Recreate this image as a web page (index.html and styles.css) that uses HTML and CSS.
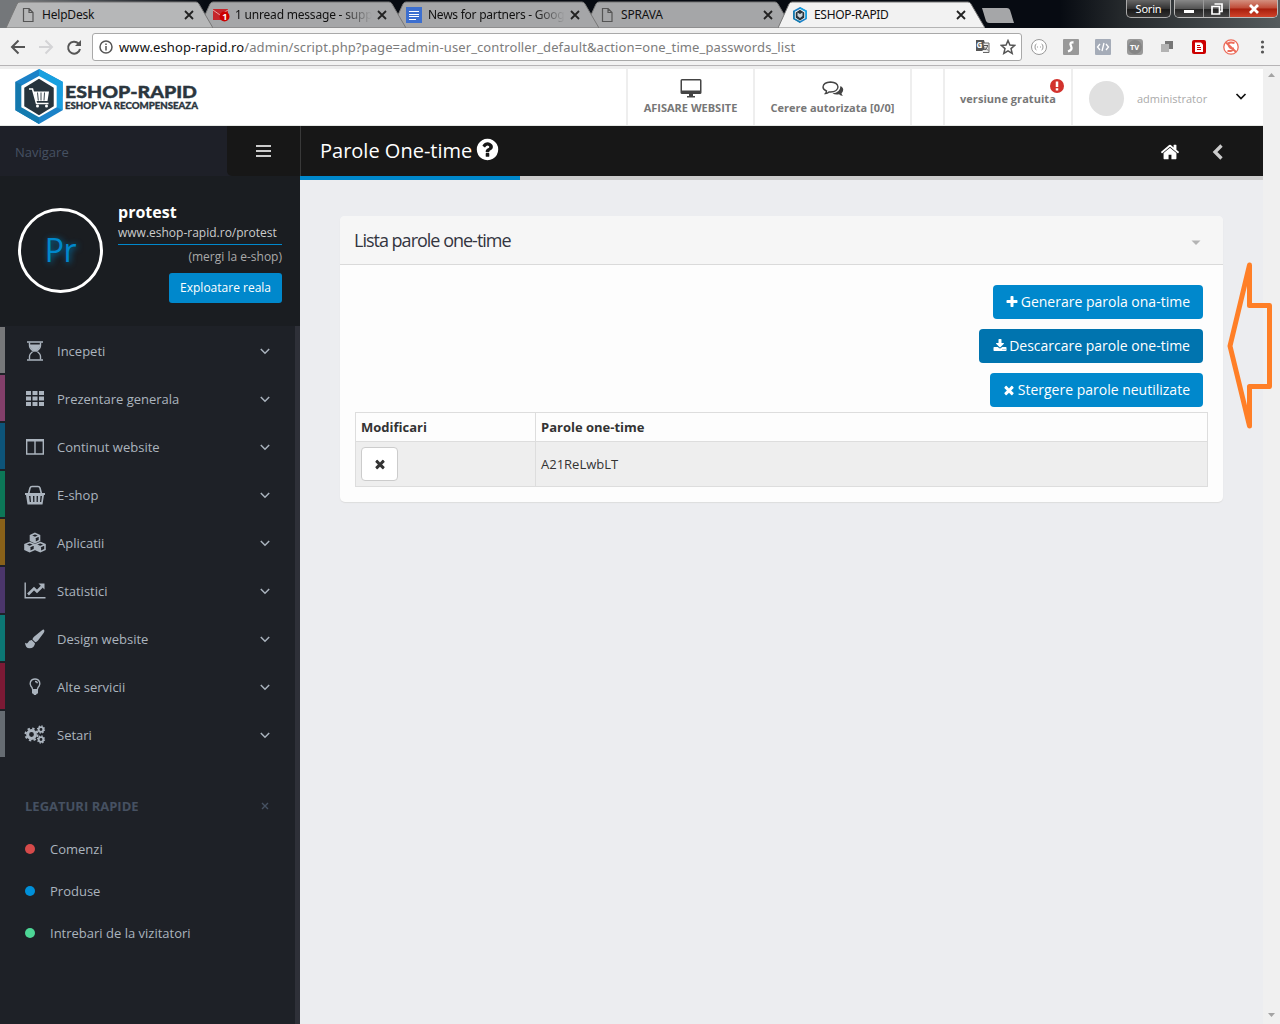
FILE: index.html
```html
<!DOCTYPE html>
<html lang="ro">
<head>
<meta charset="utf-8">
<title>ESHOP-RAPID</title>
<link rel="stylesheet" href="styles.css">
</head>
<body>
<svg class="defs" width="0" height="0">
  <symbol id="times" viewBox="0 0 1792 1792"><path d="M1490 1322q0 40-28 68l-136 136q-28 28-68 28t-68-28l-294-294-294 294q-28 28-68 28t-68-28l-136-136q-28-28-28-68t28-68l294-294-294-294q-28-28-28-68t28-68l136-136q28-28 68-28t68 28l294 294 294-294q28-28 68-28t68 28l136 136q28 28 28 68t-28 68l-294 294 294 294q28 28 28 68z"/></symbol>
  <symbol id="chev" viewBox="0 0 10 8"><path d="M1.500 2.300l3.500 3.500 3.500-3.500" fill="none" stroke="currentColor" stroke-width="1.250"/></symbol>
  <symbol id="page" viewBox="0 0 12 14"><path d="M1.5.5h5.500l4 4v9h-9.500zM7 .5v4h4" fill="none" stroke="#555" stroke-width="1.2"/></symbol>
  <symbol id="close" viewBox="0 0 10 10"><path d="M1 1l8 8M9 1l-8 8" stroke="currentColor" stroke-width="1.8"/></symbol>
  <symbol id="tabshape" viewBox="0 0 207 28" ><path d="M0 28L11 4Q12 2 14 2H190Q192 2 193 4L207 28z" stroke="#777" stroke-width="1"/></symbol>
  <symbol id="hex" viewBox="0 0 48 56">
    <path d="M24 0l24 13v29L24 56 0 42V13z" fill="#1b82c8"/><path d="M24 0l24 13v15H24z" fill="#17a0e0"/><path d="M0 13l8 4v21l-8 4z" fill="#1478ad"/><path d="M48 13v29l-8-4V17z" fill="#199fe0"/><path d="M0 42l24 14V46L8 37z" fill="#147bb0"/>
    <path d="M24 7l18 10v22L24 49 6 39V17z" fill="#fff"/><path d="M24 10l15 9v19l-15 9-15-9V19z" fill="#27343d"/>
  </symbol>
</svg>
<div class="browser">
  <div class="tabs">
    <div class="tab t1"><svg class="shape"><use href="#tabshape"/></svg><svg class="fav" width="12" height="14"><use href="#page"/></svg><span class="label">HelpDesk</span><svg class="x"><use href="#close"/></svg></div>
    <div class="tab t2"><svg class="shape"><use href="#tabshape"/></svg><svg class="fav" width="17" height="14" viewBox="0 0 17 14"><path d="M0 1h15v11H0z" fill="#c5262c"/><path d="M0 2l7 5 8-5" fill="none" stroke="#e9a3a3"/><circle cx="11.500" cy="8.500" r="5" fill="#c00"/><text x="9.300" y="12" font-size="9" font-weight="700" fill="#fff" font-family="Open Sans">1</text></svg><span class="label fade">1 unread message - supp</span><svg class="x"><use href="#close"/></svg></div>
    <div class="tab t3"><svg class="shape"><use href="#tabshape"/></svg><svg class="fav" width="16" height="16"><path d="M0 0h16v16H0z" fill="#3c6fd0"/><path d="M3 4.500h10M3 7.500h10M3 9.500h10M3 12.500h7" stroke="#fff"/></svg><span class="label fade">News for partners - Goog</span><svg class="x"><use href="#close"/></svg></div>
    <div class="tab t4"><svg class="shape"><use href="#tabshape"/></svg><svg class="fav" width="12" height="14"><use href="#page"/></svg><span class="label">SPRAVA</span><svg class="x"><use href="#close"/></svg></div>
    <div class="tab t5"><svg class="shape"><use href="#tabshape"/></svg><svg class="fav" width="16" height="16" viewBox="0 0 16 16"><use href="#hex"/><path d="M5.500 5.500L8 7l2.500-1.500V9L8 11 5.500 9z" fill="#c9d3da"/></svg><span class="label">ESHOP-RAPID</span><svg class="x"><use href="#close"/></svg></div>
    <svg class="newtab" width="33" height="15"><path d="M1 0h25q2 0 3 2l4 13H8q-2 0-3-2z" fill="#a5a6a8"/></svg>
    <div class="wincontrols">
      <span class="user">Sorin</span>
      <div class="wc">
        <span class="w1"><svg width="12" height="12"><path d="M1 8.500h10" stroke="#fff" stroke-width="3"/></svg></span>
        <span class="w2"><svg width="12" height="12"><path d="M3.500 1h7.500v7.500H9M1 3.500h7.500V11H1z" fill="none" stroke="#fff" stroke-width="1.700"/></svg></span>
        <span class="w3"><svg width="12" height="12"><path d="M2 2l8 8M10 2l-8 8" stroke="#fff" stroke-width="2.800"/></svg></span>
      </div>
    </div>
  </div>
  <div class="toolbar">
    <svg class="navi" width="84" height="20" fill="none" stroke-width="2"><path d="M16 10H3M9.500 3.500L3 10l6.500 6.500" stroke="#555"/><path d="M30 10h13M36.500 3.500L43 10l-6.500 6.500" stroke="#d4d4d6"/><path d="M69.500 6.500A6 6 0 1 0 71 12" stroke="#555"/><path d="M72 3v6h-6z" fill="#555"/></svg>
    <div class="url">
      <svg width="14" height="14" fill="none" stroke="#555" stroke-width="1.500"><circle cx="7" cy="7" r="6"/><path d="M7 6v4.500M7 3.500v1.500"/></svg>
      <span class="address"><b>www.eshop-rapid.ro</b>/admin/script.php?page=admin-user_controller_default&amp;action=one_time_passwords_list</span>
      <svg class="tr" width="15" height="15"><path d="M1 1h8l3 11H1z" fill="#555"/><path d="M6 4h8v9.500H8" fill="#eee" stroke="#666"/><path d="M1 1h6.500l2.500 10H1z" fill="#555"/><path d="M9 6.500h4M12.500 7q-.5 2.500-2.500 4M10 8.500l3 3" stroke="#555" fill="none"/><text x="1.500" y="8.500" font-size="8" font-weight="700" fill="#fff" font-family="Open Sans">G</text></svg>
      <svg width="16" height="16"><path d="M8 1.500l1.900 4.500 4.800.4-3.700 3.200 1.200 4.800L8 11.900l-4.200 2.500L5 9.600 1.300 6.400l4.800-.4z" fill="none" stroke="#555" stroke-width="1.500"/></svg>
    </div>
    <div class="exts">
      <svg><circle cx="8" cy="8" r="7.500" fill="#fff" stroke="#999"/><path d="M5.500 5q-1.500 0-1.500 3 0 3 1.500 3M10.500 5q1.500 0 1.500 3 0 3-1.500 3M6 8h1M9 8h1" stroke="#999" fill="none"/></svg>
      <svg><rect width="16" height="16" rx="1" fill="#999"/><path d="M10.500 3.500Q6 3 8 7t-3 5.500" stroke="#fff" fill="none" stroke-width="2.300"/></svg>
      <svg><rect width="16" height="16" rx="1" fill="#a5acb8"/><path d="M5 5L2.500 8 5 11M11 5l2.500 3L11 11M9 4l-2 8" stroke="#fff" fill="none" stroke-width="1.300"/></svg>
      <svg><rect width="16" height="16" rx="3" fill="#999"/><circle cx="8" cy="8" r="7" fill="#858585"/><text x="3" y="11" font-size="7.500" font-weight="700" fill="#fff" font-family="Open Sans">TV</text></svg>
      <svg><path d="M6 2h8v8H6z" fill="#777"/><path d="M2 5h8v8H2z" fill="#b3b3b3"/></svg>
      <svg><rect x="1" y="1" width="14" height="14" rx="2" fill="#c00"/><path d="M4 3.500h6l2 2V13H4z" fill="#fff"/><path d="M6 6.500h3M6 8.500h4M6 10.500h4" stroke="#c00"/></svg>
      <svg><circle cx="8" cy="8" r="7.200" fill="#fff" stroke="#ec6b59" stroke-width="1.300"/><path d="M11.500 4Q4.500 2.500 5.500 6t4.500 3.500Q10.500 12.500 4.500 12M3 3.500L13 13" stroke="#ec6b59" fill="none" stroke-width="2"/></svg>
      <svg><g fill="#555"><circle cx="7.500" cy="3" r="1.600"/><circle cx="7.500" cy="8" r="1.600"/><circle cx="7.500" cy="13" r="1.600"/></g></svg>
    </div>
  </div>
</div>
<div class="viewport">
<div class="site">
  <header class="top">
    <svg class="logo" width="200" height="56">
      <use href="#hex" width="48" height="55" x="0"/>
      <path d="M14 20h3.500l4 14.500h12" fill="none" stroke="#fff" stroke-width="1.500"/><path d="M18.500 22.500H34l-1.500 9.500H21z" fill="#fff"/><path d="M22.500 23.500l.8 8M26 23.500v8M29.500 23.500l-.5 8" stroke="#27343d" stroke-width=".9"/><circle cx="22.500" cy="37" r="1.500" fill="#fff"/><circle cx="31.500" cy="37" r="1.500" fill="#fff"/>
      <text x="50" y="28.700" textLength="132" lengthAdjust="spacingAndGlyphs" class="lg1">ESHOP-RAPID</text>
      <text x="50" y="39.700" textLength="133" lengthAdjust="spacingAndGlyphs" class="lg2">ESHOP VA RECOMPENSEAZA</text>
    </svg>
    <div class="cell c1"><svg width="22" height="19" fill="#444"><path d="M2 0h18q1.500 0 1.500 1.500v12q0 1.500-1.500 1.500H13v2h2v1.500H7V17h2v-2H2Q.5 15 .5 13.500v-12Q.5 0 2 0zm0 1.500v10h18v-10z" fill-rule="evenodd"/></svg><span>AFISARE WEBSITE</span></div>
    <div class="cell c2"><svg width="22" height="17"><path d="M17.500 4q3.500 2 2.500 5-.5 1.500-1.500 2.200.3 1.500 1.500 2.600-2.500 0-4-1.500-4 .8-6.500-1Q17 11 17.500 4z" fill="#444" transform="translate(1 1)"/><path d="M8.500 1q7 .3 7.500 5-.5 4.700-7.500 5l-1.500-.1Q5.500 12.500 3.500 12.500q.9-1 1-2.500Q1 8.500 1 6q.5-4.700 7.500-5z" fill="#fff" stroke="#444" stroke-width="1.400"/></svg><span>Cerere autorizata [0/0]</span></div>
    <div class="cell c3"></div>
    <div class="cell c4"><span>versiune gratuita</span><svg class="alert" width="14" height="14"><circle cx="7" cy="7" r="7" fill="#d2322d"/><path d="M7 2.500v5.500M7 9.300v2.200" stroke="#fff" stroke-width="2.500"/></svg></div>
    <div class="cell c5"><i class="avatar"></i><span>administrator</span><svg class="down" width="12" height="9"><path d="M1.500 2L6 6.500 10.500 2" fill="none" stroke="#111" stroke-width="1.700"/></svg></div>
  </header>
  <div class="main">
    <aside class="side">
      <div class="navhead"><span>Navigare</span><i class="burger"><svg width="15" height="14"><path d="M0 2h15M0 7h15M0 12h15" stroke="#ccc" stroke-width="2.200"/></svg></i></div>
      <div class="profile">
        <div class="pr">Pr</div>
        <div class="pinfo"><strong>protest</strong><a class="link">www.eshop-rapid.ro/protest</a><span class="mergi">(mergi la e-shop)</span><span class="real">Exploatare reala</span></div>
      </div>
      <div class="sidebody">
      <ul class="menu">
        <li class="m1"><svg viewBox="0 0 22 22"><path d="M3 2h16M3 20h16" stroke-width="1.500" stroke="currentColor"/><path d="M5.500 2.500v3q0 3 4 5.500-4 2.500-4 5.500v3M16.500 2.500v3q0 3-4 5.500 4 2.500 4 5.500v3" fill="none" stroke="currentColor" stroke-width="1.400"/><path d="M5.500 4.500h11q-.5 4-5.500 7.500-5-3.500-5.500-7.500z"/></svg><span>Incepeti</span><svg class="ch"><use href="#chev"/></svg></li>
        <li class="m2"><svg viewBox="0 0 22 22"><path d="M2 3h5v4H2zM8.500 3h5v4h-5zM15 3h5v4h-5zM2 8.500h5v4H2zM8.500 8.500h5v4h-5zM15 8.500h5v4h-5zM2 14h5v4H2zM8.500 14h5v4h-5zM15 14h5v4h-5z"/></svg><span>Prezentare generala</span><svg class="ch"><use href="#chev"/></svg></li>
        <li class="m3"><svg viewBox="0 0 22 22"><path d="M2.700 4h16.600v14H2.700zM11 4v14" fill="none" stroke="currentColor" stroke-width="1.400"/><path d="M2 3h18v2.500H2z"/></svg><span>Continut website</span><svg class="ch"><use href="#chev"/></svg></li>
        <li class="m4"><svg viewBox="0 0 22 22"><path d="M4.500 10L6 4q.5-1.500 2-1.500h6q1.500 0 2 1.500l1.500 6M9 2.500h4" fill="none" stroke="currentColor" stroke-width="1.600"/><path fill-rule="evenodd" d="M1 9h20v2h-1l-1.500 9.500h-15L2 11H1zm4 3l.8 6h1.200l-.5-6zm4 0l.2 6h1.200v-6zm3.600 0v6h1.200l.2-6zm3.900 0l-.5 6h1.200l.8-6z"/></svg><span>E-shop</span><svg class="ch"><use href="#chev"/></svg></li>
        <li class="m5"><svg viewBox="0 0 22 22"><g fill="none" stroke="currentColor" stroke-width="1.600"><path d="M11 1.500l4.500 2v5L11 10.700 6.500 8.500v-5zM6.500 3.500L11 5.700l4.500-2.200M11 5.500v5"/><path d="M5.700 10.500l4.800 2v5l-4.800 2.200-4.700-2.200v-5zM1 12.500l4.700 2.200 4.800-2.200M5.700 14.500v5M16.300 10.500l4.700 2v5l-4.700 2.200-4.800-2.200v-5zM11.500 12.500l4.800 2.200 4.700-2.200M16.300 14.500v5"/></g><path d="M6.500 4L11 6v4.500l-4.500-2zM1 13l4.700 2v4.500L1 17.500zM11.500 13l4.800 2v4.500l-4.800-2z"/></svg><span>Aplicatii</span><svg class="ch"><use href="#chev"/></svg></li>
        <li class="m6"><svg viewBox="0 0 22 22"><path d="M1.200 2.500v15.300h20.300" fill="none" stroke="currentColor" stroke-width="1.400"/><path d="M4 14.500l6-6 3 3 5-5" fill="none" stroke="currentColor" stroke-width="2.600"/><path d="M14.500 3.500h6v6z"/></svg><span>Statistici</span><svg class="ch"><use href="#chev"/></svg></li>
        <li class="m7"><svg viewBox="0 0 22 22"><path d="M20 1.800q1 1-.2 3L14 12.500q-1.500 1.700-2.700 1.800L8.500 11.500q0-1.500 1.800-3L18 2.200Q19.300 1 20 1.800zM7.700 12l3.300 3.300q-.5 5-5.500 5-4 0-4.500-5.500 2.500 1.300 3-.2.800-2.200 3.700-2.600z"/></svg><span>Design website</span><svg class="ch"><use href="#chev"/></svg></li>
        <li class="m8"><svg viewBox="0 0 22 22"><path d="M8.500 13q-.3-1.500-1.500-2.700-1.500-1.800-.5-4.500Q7.800 3 11 3t4.500 2.800q1 2.700-.5 4.500-1.200 1.200-1.500 2.700M11 5.500q2 0 2.500 1.800" fill="none" stroke="currentColor" stroke-width="1.400"/><path d="M8 13h6v4.300l-1.500.7-.5 1h-2l-.5-1L8 17.300z"/></svg><span>Alte servicii</span><svg class="ch"><use href="#chev"/></svg></li>
        <li class="m9"><svg viewBox="0 0 22 22"><g fill="none" stroke="currentColor"><circle cx="7.500" cy="10.500" r="3.900" stroke-width="3"/><circle cx="7.500" cy="10.500" r="6" stroke-width="2" stroke-dasharray="2.356"/><circle cx="17" cy="5.500" r="2.300" stroke-width="1.800"/><circle cx="17" cy="5.500" r="3.500" stroke-width="1.300" stroke-dasharray="1.370"/><circle cx="17" cy="15.500" r="2.300" stroke-width="1.800"/><circle cx="17" cy="15.500" r="3.500" stroke-width="1.300" stroke-dasharray="1.370"/></g></svg><span>Setari</span><svg class="ch"><use href="#chev"/></svg></li>
      </ul>
      <div class="qh"><span>LEGATURI RAPIDE</span><svg width="8" height="8"><path d="M1 1l6 6M7 1L1 7" stroke="#465162" stroke-width="1.400"/></svg></div>
      <ul class="quick"><li class="red">Comenzi</li><li class="blue">Produse</li><li class="green">Intrebari de la vizitatori</li></ul>
      </div>
    </aside>
    <section class="content">
      <div class="pagehead"><h1>Parole One-time</h1><svg class="q" width="25" height="25" viewBox="0 0 1792 1792"><path fill="#fff" d="M1024 1376v-192q0-14-9-23t-23-9h-192q-14 0-23 9t-9 23v192q0 14 9 23t23 9h192q14 0 23-9t9-23zm256-672q0-88-55.500-163t-138.500-116-170-41q-243 0-371 213-15 24 8 42l132 100q7 6 19 6 16 0 25-12 53-68 86-92 34-24 86-24 48 0 85.500 26t37.500 59q0 38-20 61t-68 45q-63 28-115.500 86.500t-52.500 125.500v36q0 14 9 23t23 9h192q14 0 23-9t9-23q0-19 21.500-49.500t54.500-49.500q32-18 49-28.500t46-35 44.500-48 28-60.500 12.500-81zm384 192q0 209-103 385.500t-279.500 279.500-385.500 103-385.500-103-279.500-279.500-103-385.500 103-385.500 279.500-279.500 385.500-103 385.500 103 279.500 279.500 103 385.500z"/></svg>
        <svg class="home" width="20" height="20" viewBox="0 0 1792 1792"><path fill="#fff" d="M1472 992v480q0 26-19 45t-45 19h-384v-384h-256v384h-384q-26 0-45-19t-19-45v-480q0-1 .5-3t.5-3l575-474 575 474q1 2 1 6zm223-69l-62 74q-8 9-21 11h-3q-13 0-21-7l-692-577-692 577q-12 8-24 7-13-2-21-11l-62-74q-8-10-7-23.500t11-21.500l719-599q32-26 76-26t76 26l244 204v-195q0-14 9-23t23-9h192q14 0 23 9t9 23v408l219 182q10 8 11 21.500t-7 23.500z"/></svg>
        <svg class="back" width="12" height="16"><path d="M9.500 1.500L3 8l6.500 6.500" fill="none" stroke="#ccc" stroke-width="3.300"/></svg></div>
      <div class="progress"><i></i></div>
      <div class="panel">
        <div class="ph"><h2>Lista parole one-time</h2><svg width="10" height="6"><path d="M.5.500h9L5 5z" fill="#b4b4b4"/></svg></div>
        <div class="pb">
          <div class="btns">
            <a class="btn b1"><svg viewBox="0 0 1792 1792"><path d="M1600 736v192q0 40-28 68t-68 28h-416v416q0 40-28 68t-68 28h-192q-40 0-68-28t-28-68v-416h-416q-40 0-68-28t-28-68v-192q0-40 28-68t68-28h416v-416q0-40 28-68t68-28h192q40 0 68 28t28 68v416h416q40 0 68 28t28 68z"/></svg><span>Generare parola ona-time</span></a>
            <a class="btn b2"><svg viewBox="0 0 1792 1792"><path d="M1344 1344q0-26-19-45t-45-19-45 19-19 45 19 45 45 19 45-19 19-45zm256 0q0-26-19-45t-45-19-45 19-19 45 19 45 45 19 45-19 19-45zm128-224v320q0 40-28 68t-68 28h-1472q-40 0-68-28t-28-68v-320q0-40 28-68t68-28h465l135 136q58 56 136 56t136-56l136-136h464q40 0 68 28t28 68zm-325-569q17 41-14 70l-448 448q-18 19-45 19t-45-19l-448-448q-31-29-14-70 17-39 59-39h256v-448q0-26 19-45t45-19h256q26 0 45 19t19 45v448h256q42 0 59 39z"/></svg><span>Descarcare parole one-time</span></a>
            <a class="btn b3"><svg><use href="#times"/></svg><span>Stergere parole neutilizate</span></a>
          </div>
          <table><tr><th class="first">Modificari</th><th>Parole one-time</th></tr><tr class="row"><td><a class="del"><svg width="14" height="14" fill="#333"><use href="#times"/></svg></a></td><td>A21ReLwbLT</td></tr></table>
        </div>
      </div>
    </section>
  </div>
</div>
<div class="scroll"><svg width="7" height="4"><path d="M3.500 0L7 4H0z" fill="#a3a3a3"/></svg><svg width="7" height="4"><path d="M0 0h7L3.500 4z" fill="#a3a3a3"/></svg></div>
</div>
<svg class="arrow" width="46" height="168"><path d="M22.500 3v40.500h20v81h-20V164L3 84z" fill="none" stroke="#ff7f27" stroke-width="5" stroke-linejoin="round"/></svg>
</body>
</html>
```
FILE: styles.css
```css
*{box-sizing:border-box}
body{margin:0;width:1280px;height:1024px;overflow:hidden;position:relative;font-family:"Open Sans",sans-serif;font-size:13px;color:#333}
svg{flex:none;display:block}
ul{list-style:none;margin:0;padding:0}
h1,h2{margin:0;font-weight:400}
.defs{position:absolute}
.browser{height:66px;font-family:"Noto Sans",sans-serif}
.tabs{height:28px;display:flex;padding-left:6px;background:linear-gradient(90deg,#74777a 0,#74777a 20px,#070b12 205px,#070b12 1060px,#24282b 1120px,#555b5d 1280px)}
.tab{position:relative;isolation:isolate;width:193px;height:28px;flex:none;display:flex;align-items:center;padding:2px 5px 0 16px;font-size:12px;color:#111}
.tab .shape{position:absolute;left:0;top:0;width:207px;height:28px;fill:#a5a6a8;z-index:-1}
.t1{z-index:5}.t2{z-index:4}.t3{z-index:3}.t4{z-index:2}.t5{z-index:6}
.t1 .shape{fill:#b6b7b8}
.t5 .shape{fill:#f2f2f2}
.t2,.t3,.t5{padding-left:14px}
.tab .label{margin:-1px 0 0 8px;flex:1;white-space:nowrap;letter-spacing:-.4px}
.t2 .label{margin-left:5px;letter-spacing:-.2px}
.t3 .label{margin-left:6px;letter-spacing:-.25px}
.t4 .label{letter-spacing:-.2px}
.t5 .label{margin-left:6px;letter-spacing:-.3px}
.t1 .label{letter-spacing:-.2px}
.label.fade{overflow:hidden;-webkit-mask:linear-gradient(90deg,#000 107px,transparent 137px)}
.tab .x{width:10px;height:10px;color:#222}
.newtab{margin:8px 0 0 10px}
.wincontrols{display:flex;margin-left:auto;padding-right:2px;height:19px;color:#fff}
.user{width:45px;height:18px;border:1px solid #aaa;border-top:0;border-radius:0 0 5px 5px;background:linear-gradient(#666,#333 50%,#161616 51%,#333);font-size:11px;line-height:17px;letter-spacing:-.2px;text-align:center;margin-right:3px}
.wc{display:flex;border:1px solid #bbb;border-top:0;border-radius:0 0 5px 5px;overflow:hidden;height:18px}
.wc span{display:flex;align-items:center;justify-content:center;width:28px;background:linear-gradient(#888,#555 50%,#222 51%,#444)}
.wc .w2{border:solid #999;border-width:0 1px;width:27px}
.wc .w3{width:47px;background:linear-gradient(#d4907f,#bf4a36 48%,#a71e0c 52%,#d0432a)}
.toolbar{height:38px;background:#f2f2f2;border-bottom:1px solid #b6b4b6;display:flex;align-items:center;padding:0 9px}
.url{width:932px;height:28px;border:1px solid #a9a9a9;border-radius:3px;background:#fff;display:flex;align-items:center;padding:0 5px 0 6px;margin-left:-1px}
.address{font-size:13px;color:#7c7c7c;margin-left:6px;flex:1;white-space:nowrap;letter-spacing:.1px}
.address b{font-weight:400;color:#111}
.url .tr{margin-right:10px}
.exts{display:flex;margin-left:9px;gap:16px}
.exts svg{width:16px;height:16px}
.viewport{height:958px;display:flex}
.site{width:1263px;border-top:3px solid #eee}
.scroll{width:17px;background:#f0f0f0;display:flex;flex-direction:column;justify-content:space-between;align-items:center;padding:7px 0}
.top{height:57px;display:flex;background:#fff;border-bottom:1px solid #e6e9e6;color:#777;font-weight:700;font-size:11px}
.logo{margin-left:15px;margin-right:auto}
.lg1{font:900 17px Lato,sans-serif;fill:#2b363e;stroke:#2b363e;stroke-width:.4px}
.lg2{font:900 8.500px Lato,sans-serif;fill:#2b363e;stroke:#2b363e;stroke-width:.3px}
.cell{border-left:2px solid #eee;display:flex;position:relative}
.c1,.c2{flex-direction:column;align-items:center;line-height:16px;white-space:nowrap}
.c1{width:127px;padding-top:10px}
.c1 span{margin-top:2px}
.c2{width:157px;padding-top:12px}
.c2 span{margin-top:2px}
.c3{width:33px}
.c4{width:128px;padding:22px 0 0 15px;line-height:16px;white-space:nowrap;letter-spacing:.05px}
.alert{position:absolute;left:105px;top:10px}
.c5{width:192px;align-items:center;padding:2px 16px 0 16px;font-weight:400;color:#aaa}
.avatar{width:35px;height:35px;border-radius:50%;background:#e0e0e0;margin-right:13px}
.down{margin:-4px 0 0 auto}
.main{display:flex;height:898px}
.side{width:300px;background:#1e2127;color:#abb4be;display:flex;flex-direction:column}
.navhead{height:50px;background:#1e2028;color:#465162;display:flex;justify-content:space-between;align-items:center;padding-left:15px}
.navhead span{margin-top:2px}
.burger{width:73px;height:50px;background:#171717;border-radius:0 0 0 5px;display:flex;align-items:center;justify-content:center}
.profile{height:150px;background:#1a1d21;display:flex;padding:26px 18px 0}
.pr{width:85px;height:85px;border:3px solid #fff;border-radius:50%;margin:6px 15px 0 0;padding-bottom:3px;color:#08c;font-size:32px;letter-spacing:-.3px;display:flex;align-items:center;justify-content:center;text-shadow:1px 1px 6px #0077b3}
.pinfo{width:164px;display:flex;flex-direction:column;align-items:flex-end}
.pinfo strong{align-self:stretch;color:#fff;font-size:16px;line-height:20px}
.link{align-self:stretch;font-size:12px;line-height:22px;height:23px;border-bottom:1px solid #08c;color:#ccc;white-space:nowrap}
.mergi{font-size:12px;line-height:24px;color:#aaa}
.real{height:30px;margin-top:4px;background:#08c;color:#fff;border-radius:3px;padding:0 11px;font-size:12px;line-height:29px;white-space:nowrap}
.sidebody{flex:1;border-right:5px solid #2e3038}
.menu{padding-top:1px}
.menu li{height:46px;margin-bottom:2px;border-left:5px solid;display:flex;align-items:center;padding:2px 24px 0 19px}
.menu li>*{color:#abb4be}
.menu li svg{width:22px;height:22px;fill:#abb4be;margin-top:-1px}
.menu span{margin-left:11px;flex:1}
.menu li .ch{width:12px;height:10px;margin-top:0}
.menu .m1{border-color:#77787a}
.menu .m2{border-color:#833f6a}
.menu .m3{border-color:#0d5479}
.menu .m4{border-color:#0c7757}
.menu .m5{border-color:#896119}
.menu .m6{border-color:#4b366b}
.menu .m7{border-color:#0c7774}
.menu .m8{border-color:#7c1a35}
.menu .m9{border-color:#666c72}
.qh{display:flex;justify-content:space-between;align-items:center;height:20px;margin:37px 26px 12px 25px;font-size:13px;font-weight:700;color:#465162;position:static;padding-top:2px;height:22px}
.quick li{height:42px;line-height:42px;padding-left:25px;display:flex;align-items:center}
.quick li:before{content:"";width:10px;height:10px;border-radius:50%;margin-right:15px;background:#d64a4a}
.quick .blue:before{background:#0090d9}
.quick .green:before{background:#4dd696}
.content{width:963px;background:#ecedf0}
.pagehead{height:50px;background:#171717;border-left:1px solid #393939;display:flex;align-items:center;color:#fff;padding-left:19px}
h1{font-size:20px;line-height:50px;white-space:nowrap}
.q{margin:-4px 0 0 3px}
.home{margin:1px 32px 0 auto}
.back{margin:2px 39px 0 0}
.progress{height:4px;background:#ccc}
.progress i{display:block;width:220px;height:4px;background:#08c}
.panel{margin:36px 40px 0;height:286px;background:#fdfdfd;border-radius:5px;box-shadow:0 1px 1px #ddd;overflow:hidden}
.ph{height:49px;background:#f6f6f6;border-bottom:1px solid #dadada;display:flex;align-items:center;justify-content:space-between;padding:0 22px 0 14px;color:#33353f}
.ph svg{margin-top:5px}
h2{font-size:18px;letter-spacing:-1px}
.pb{padding:20px 15px 0}
.btns{display:flex;flex-direction:column;align-items:flex-end;gap:10px;padding-right:5px}
.btn{height:34px;background:#08c;color:#fff;border-radius:4px;display:flex;align-items:center;font-size:14px;padding:0 13px 1px 11px;white-space:nowrap;justify-content:flex-end}
.btn svg{width:14px;height:14px;fill:#fff;margin:1px 2px 0 0}
.b1{width:210px}
.b2{width:224px;background:#0074af}
.b3{width:213px}
table{border-collapse:collapse;width:853px;margin-top:5px}
th,td{border:1px solid #ddd;text-align:left;padding:0 5px;height:29px}
.first{width:180px}
.row{background:#eee}
.row td{height:45px}
.del{width:37px;height:34px;border:1px solid #ccc;border-radius:4px;background:#fff;display:flex;align-items:center;justify-content:center}
.arrow{position:absolute;left:1227px;top:262px}
```
